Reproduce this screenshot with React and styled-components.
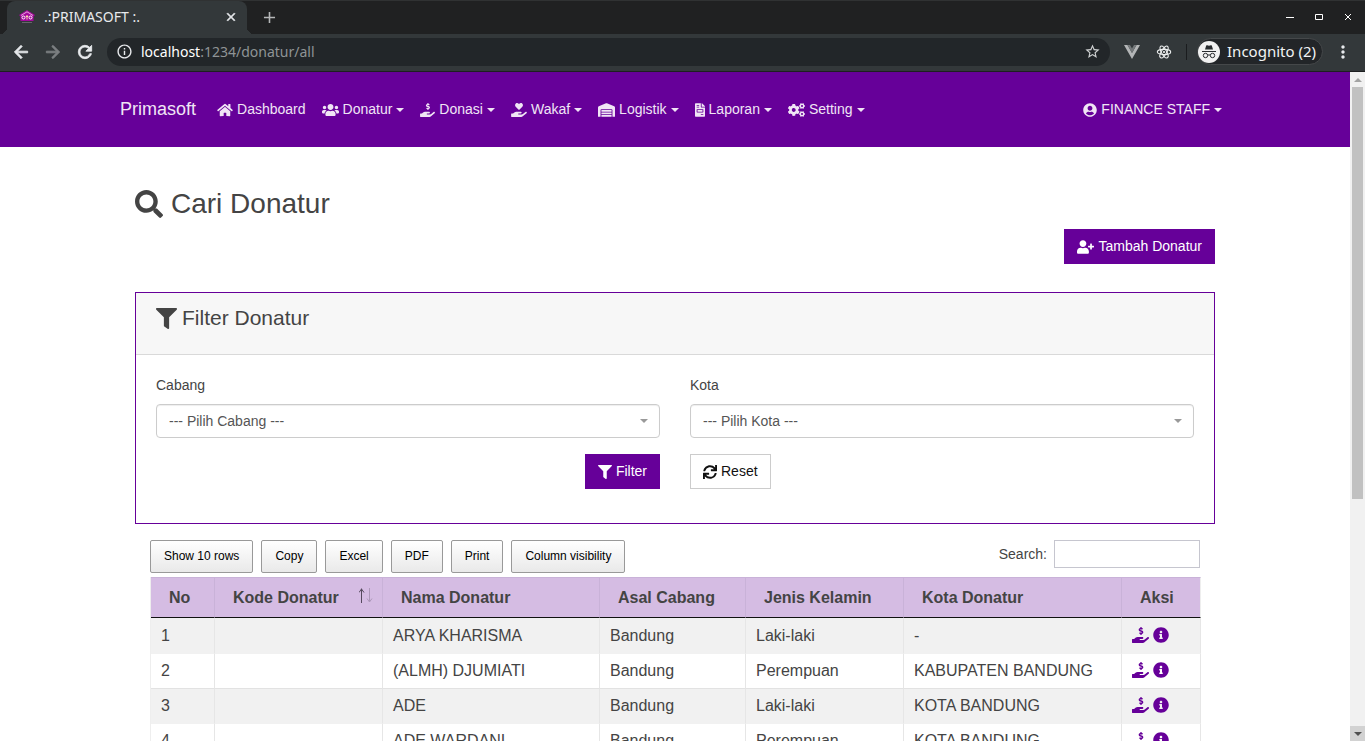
import React from 'react';
import styled, { createGlobalStyle } from 'styled-components';
import {
  FaHome, FaUsers, FaHandHoldingHeart, FaWarehouse, FaFileInvoice,
  FaCogs, FaUserCircle, FaSearch, FaUserPlus, FaFilter, FaSync, FaInfoCircle,
} from 'react-icons/fa';
import { MdArrowBack, MdArrowForward, MdRefresh, MdInfoOutline, MdStarBorder, MdMoreVert, MdClose, MdAdd } from 'react-icons/md';

const purple = '#660099';

const GlobalStyle = createGlobalStyle`
  *, *::before, *::after { box-sizing: border-box; }
  body {
    margin: 0;
    overflow: hidden;
    background: #fff;
    color: #444;
    font: 14px/21px "Liberation Sans", Arial, sans-serif;
  }
  button, input, select { font: inherit; margin: 0; }
  h1, h2 { margin: 0; font-weight: 400; }
  a { color: inherit; text-decoration: none; }
`;

const Window = styled.div`
  display: flex;
  flex-direction: column;
  height: 100vh;
`;

/* ---------- browser frame ---------- */
const TabStrip = styled.div`
  flex: none;
  display: flex;
  align-items: stretch;
  height: 34px;
  padding-left: 7px;
  border-top: 1px solid #303233;
  background: #202122;
  color: #e8eaed;
  font-family: "Noto Sans", sans-serif;
`;

const Tab = styled.div`
  position: relative;
  display: flex;
  align-items: center;
  width: 240px;
  padding: 0 9px 2px 12px;
  border-radius: 8px 8px 0 0;
  background: #33383a;
  font-size: 14px;
  &::before, &::after {
    content: '';
    position: absolute;
    bottom: 0;
    width: 7px;
    height: 7px;
  }
  &::before {
    right: 100%;
    background: radial-gradient(circle at 0 0, transparent 7px, #33383a 7px);
  }
  &::after {
    left: 100%;
    background: radial-gradient(circle at 100% 0, transparent 7px, #33383a 7px);
  }
`;

const TabTitle = styled.span`
  flex: 1;
  padding-left: 9px;
`;

const FrameButton = styled.button`
  display: inline-flex;
  align-items: center;
  justify-content: center;
  width: ${(p) => p.$width || 32}px;
  padding: 0;
  border: 0;
  background: none;
  color: ${(p) => p.$color || '#e8eaed'};
  path:not([fill='none']) { stroke-width: ${(p) => (p.$bold ? 1 : 'inherit')}; }
`;

const WindowControls = styled.div`
  display: flex;
  margin-left: auto;
  padding: 0 3px 2px 0;
`;

const Toolbar = styled.div`
  flex: none;
  display: flex;
  align-items: center;
  height: 38px;
  padding: 0 3px 2px 5px;
  border-bottom: 1px solid #1d1f20;
  background: #33383a;
  color: #e8eaed;
  font-family: "Noto Sans", sans-serif;
`;

const AddressBar = styled.div`
  flex: 1;
  display: flex;
  align-items: center;
  height: 28px;
  margin: 0 6px;
  padding: 0 9px 0 9px;
  border-radius: 14px;
  background: #222629;
`;

const AddressText = styled.div`
  flex: 1;
  padding-left: 8px;
  color: #8f9496;
  font-size: 14px;
  b { color: #fff; font-weight: 400; }
`;

const Divider = styled.span`
  width: 1px;
  height: 16px;
  margin: 0 10px 0 6px;
  background: #1a1c1e;
`;

const Incognito = styled.button`
  display: flex;
  align-items: center;
  gap: 7px;
  height: 27px;
  padding: 0 6px 0 0;
  border: 1px solid #45484a;
  border-radius: 14px;
  background: #222528;
  color: #f1f3f4;
  font-size: 15px;
`;

/* ---------- page ---------- */
const Viewport = styled.div`
  flex: 1;
  display: flex;
  min-height: 0;
`;

const Page = styled.div`
  flex: 1;
  min-width: 0;
  overflow: hidden;
`;

const Scrollbar = styled.div`
  flex: none;
  display: flex;
  flex-direction: column;
  width: 15px;
  background: #f1f1f1;
`;

const ScrollArrow = styled.button`
  flex: none;
  display: flex;
  align-items: center;
  justify-content: center;
  height: 15px;
  padding: 0;
  border: 0;
  background: ${(p) => (p.$active ? '#d2d2d2' : '#f1f1f1')};
  color: ${(p) => (p.$active ? '#505050' : '#a3a3a3')};
`;

const ScrollTrack = styled.div`
  flex: 1;
  padding: 0 2px;
`;

const ScrollThumb = styled.div`
  height: calc(65% - 3px);
  background: #c1c1c1;
`;

const Navbar = styled.nav`
  height: 75px;
  background: ${purple};
  color: #f0e5f5;
`;

const NavInner = styled.div`
  display: flex;
  align-items: center;
  max-width: 1110px;
  height: 100%;
  margin: 0 auto;
`;

const Brand = styled.a`
  margin-right: 13px;
  font-size: 18px;
  line-height: 27px;
`;

const IconLabel = styled.span`
  display: inline-flex;
  align-items: center;
  gap: ${(p) => p.$gap || 4}px;
  vertical-align: top;
  svg {
    flex: none;
    width: ${(p) => p.$width || 14}px;
    height: ${(p) => p.$height || 14}px;
  }
`;

const NavLink = styled.a`
  padding: 8px;
  white-space: nowrap;
  &:last-child { margin-left: auto; }
`;

const Caret = styled.span`
  border: 4px solid transparent;
  border-top-color: currentColor;
  border-bottom: 0;
`;

const Content = styled.main`
  max-width: 1110px;
  margin: 0 auto;
  padding: 40px 15px;
`;

const Title = styled.h1`
  font-size: 28px;
  line-height: 34px;
`;

const ActionRow = styled.div`
  display: flex;
  justify-content: flex-end;
  margin: 8px 0 28px;
`;

const Button = styled.button`
  height: 35px;
  padding: 0 12px;
  border: 1px solid ${(p) => (p.$plain ? '#ccc' : purple)};
  background: ${(p) => (p.$plain ? '#fff' : purple)};
  color: ${(p) => (p.$plain ? '#111' : '#fff')};
`;

const Card = styled.section`
  border: 1px solid ${purple};
`;

const CardHeader = styled.header`
  height: 62px;
  padding: 12px 20px;
  border-bottom: 1px solid #d9d9d9;
  background: #f7f7f7;
`;

const CardTitle = styled.h2`
  font-size: 21px;
  line-height: 26px;
`;

const FilterForm = styled.form`
  display: grid;
  grid-template-columns: 1fr 1fr;
  column-gap: 30px;
  padding: 20px 20px 34px;
`;

const Field = styled.div`
  display: flex;
  flex-direction: column;
  gap: 8px;
  margin-bottom: 16px;
`;

const SelectBox = styled.div`
  position: relative;
  &::after {
    content: '';
    position: absolute;
    top: 15px;
    right: 12px;
    border: 4px solid transparent;
    border-top-color: #999;
    border-bottom: 0;
    pointer-events: none;
  }
`;

const Select = styled.select`
  display: block;
  appearance: none;
  width: 100%;
  height: 34px;
  padding: 0 12px;
  border: 1px solid #ccc;
  border-radius: 4px;
  background: #fff;
  color: #555;
  box-shadow: inset 0 1px 1px rgba(0, 0, 0, 0.07);
`;

const FormAction = styled.div`
  display: flex;
  justify-content: ${(p) => (p.$end ? 'flex-end' : 'flex-start')};
`;

const TableArea = styled.section`
  padding: 16px 15px 0;
`;

const TableTools = styled.div`
  display: flex;
  justify-content: space-between;
  height: 37px;
`;

const ToolButtons = styled.div`
  display: flex;
  gap: 8px;
`;

const ToolButton = styled.button`
  height: 33px;
  padding: 0 13px;
  border: 1px solid #999;
  border-radius: 2px;
  background: linear-gradient(#fff, #e9e9e9);
  color: #000;
  font-size: 12px;
  white-space: nowrap;
`;

const SearchLabel = styled.label`
  display: flex;
  align-items: center;
  gap: 7px;
  height: 28px;
`;

const SearchInput = styled.input`
  width: 146px;
  height: 28px;
  padding: 0 8px;
  border: 1px solid #c6c6cf;
  border-radius: 0;
  background: #fff;
`;

const Table = styled.table`
  width: 100%;
  table-layout: fixed;
  border-collapse: separate;
  border-spacing: 0;
  border-left: 1px solid #eee;
  font-size: 16px;
  line-height: 24px;
`;

const HeadCell = styled.th`
  height: 41px;
  padding: 0 8px 0 18px;
  border-top: 1px solid #c9b2d8;
  border-right: 1px solid #c9b2d8;
  border-bottom: 1px solid #111;
  background: #d5bce3;
  text-align: left;
  white-space: nowrap;
  &:last-child { border-right-color: #eee; }
`;

const Sortable = styled.span`
  display: flex;
  justify-content: space-between;
`;

const Cell = styled.td`
  height: 35px;
  padding: 0 10px;
  border-right: 1px solid #e6e6e6;
  border-top: 1px solid #f1f1f1;
  white-space: nowrap;
`;

const Row = styled.tr`
  background: ${(p) => (p.$striped ? '#f1f1f1' : '#fff')};
  &:not(:first-child) > td { border-top-color: ${(p) => (p.$striped ? '#e2e2e2' : '#f1f1f1')}; }
`;

const RowActions = styled.div`
  display: flex;
  align-items: center;
  gap: 4px;
  padding-bottom: 2px;
  color: ${purple};
  a { display: flex; }
`;

/* An open hand under a dollar sign, 17:16 */
const HandDollar = (props) => (
  <svg viewBox="0 0 544 512" fill="currentColor" aria-hidden="true" {...props}>
    <path d="M257.600 144.300l50 14.300c3.600 1 6.100 4.400 6.100 8.100 0 4.600-3.800 8.400-8.400 8.400h-32.800c-3.600 0-7.100-.8-10.300-2.200-4.800-2.200-10.400-1.700-14.100 2l-17.500 17.500c-5.300 5.300-4.700 14.300 1.500 18.400 9.500 6.300 20.300 10.100 31.800 11.500V240c0 8.800 7.200 16 16 16h16c8.800 0 16-7.200 16-16v-17.600c30.300-3.600 53.300-31 49.300-63-2.900-23-20.700-41.300-42.900-47.700l-50-14.300c-3.600-1-6.100-4.400-6.100-8.100 0-4.600 3.800-8.400 8.400-8.400h32.800c3.600 0 7.100.8 10.300 2.200 4.800 2.200 10.400 1.700 14.100-2l17.500-17.500c5.300-5.300 4.700-14.300-1.500-18.400-9.500-6.300-20.300-10.100-31.800-11.500V16c0-8.800-7.200-16-16-16h-16c-8.800 0-16 7.200-16 16v17.600c-30.300 3.600-53.300 31-49.300 63 2.900 23 20.700 41.300 42.900 47.700zM533.900 328.100c-11.200-10.700-28.500-10-40.300 0L406.400 402c-10.700 9.100-24 14-37.800 14H256.900c-8.300 0-15.100-7.200-15.100-16s6.800-16 15.100-16h73.900c15.100 0 29-10.900 31.400-26.600 3.100-20-11.500-37.400-29.800-37.400H181.300c-25.500 0-50.200 9.300-69.900 26.100L67.500 384H15.100C6.800 384 0 391.200 0 400v96c0 8.800 6.800 16 15.100 16H352.100c13.700 0 27-4.900 37.800-14l142.800-121c14.400-12.100 15.500-35.300 1.200-48.900z" />
  </svg>
);

const SortArrows = () => (
  <svg width="15" height="24" viewBox="0 0 15 24" fill="none" aria-hidden="true">
    <path d="M2.500 17V2.500M0 6.500 2.500 3l2.500 3.500" stroke="#55495d" />
    <path d="M10.500 2v14M8 12.500l2.500 3.500 2.500-3.500" stroke="#ad98ba" />
  </svg>
);

const nav = [
  { label: 'Dashboard', Icon: FaHome, width: 16 },
  { label: 'Donatur', Icon: FaUsers, width: 17, menu: true },
  { label: 'Donasi', Icon: HandDollar, width: 15, menu: true },
  { label: 'Wakaf', Icon: FaHandHoldingHeart, width: 16, menu: true },
  { label: 'Logistik', Icon: FaWarehouse, width: 17, menu: true },
  { label: 'Laporan', Icon: FaFileInvoice, width: 10, menu: true },
  { label: 'Setting', Icon: FaCogs, width: 17, menu: true },
  { label: 'FINANCE STAFF', Icon: FaUserCircle, width: 14, menu: true },
];

const columns = [
  ['No', 64], ['Kode Donatur', 168], ['Nama Donatur', 217], ['Asal Cabang', 146],
  ['Jenis Kelamin', 158], ['Kota Donatur', 218], ['Aksi', 79],
];

const rows = [
  ['1', '', 'ARYA KHARISMA', 'Bandung', 'Laki-laki', '-'],
  ['2', '', '(ALMH) DJUMIATI', 'Bandung', 'Perempuan', 'KABUPATEN BANDUNG'],
  ['3', '', 'ADE', 'Bandung', 'Laki-laki', 'KOTA BANDUNG'],
  ['4', '', 'ADE WARDANI', 'Bandung', 'Perempuan', 'KOTA BANDUNG'],
];

const Favicon = () => (
  <svg width="16" height="14" viewBox="0 0 16 14" aria-hidden="true">
    <path d="M8 0 16 5 14.500 6.500V11H1.500V6.500L0 5Z" fill="#a3099c" />
    <path d="M2 5.500 8 1.800 14 5.500" fill="none" stroke="#e9a7dc" />
    <circle cx="4.500" cy="7.500" r="1.500" fill="none" stroke="#fff" />
    <path d="M8 5v4.500M6.800 6.500h2.400" stroke="#ffd7a8" />
    <circle cx="11.500" cy="7.500" r="1.500" fill="none" stroke="#fff" />
    <path d="M3 12.500h10" stroke="#68656c" />
  </svg>
);

const VueMark = () => (
  <svg width="16" height="14" viewBox="0 0 16 14" aria-hidden="true">
    <path d="M0 0h3.500L8 8 12.500 0H16L8 14Z" fill="#b3b5b6" />
    <path d="M3.500 0H6l2 3.500L10 0h2.500L8 8Z" fill="#74787a" />
  </svg>
);

const ReactMark = () => (
  <svg width="16" height="16" viewBox="0 0 16 16" fill="none" stroke="#eceeee" strokeWidth="1.100" aria-hidden="true">
    <ellipse cx="8" cy="8" rx="6.700" ry="2.600" />
    <ellipse cx="8" cy="8" rx="6.700" ry="2.600" transform="rotate(60 8 8)" />
    <ellipse cx="8" cy="8" rx="6.700" ry="2.600" transform="rotate(120 8 8)" />
    <circle cx="8" cy="8" r="1" fill="#fff" stroke="none" />
  </svg>
);

const Spy = () => (
  <svg width="22" height="22" viewBox="0 0 22 22" aria-hidden="true">
    <circle cx="11" cy="11" r="11" fill="#f1f1f1" />
    <path d="M7 8.500 8.200 4.500Q8.500 4 9.200 4.200L11 4.800l1.800-.6Q13.500 4 13.800 4.500L15 8.500Z" fill="#292c2f" />
    <path d="M4 10.500h14" stroke="#292c2f" />
    <g fill="none" stroke="#292c2f">
      <circle cx="7.500" cy="14.500" r="2.200" />
      <circle cx="14.500" cy="14.500" r="2.200" />
      <path d="M9.700 14.200q1.300-.7 2.600 0" />
    </g>
  </svg>
);

export default function App() {
  return (
    <>
      <GlobalStyle />
      <Window>
        <TabStrip>
          <Tab>
            <Favicon />
            <TabTitle>.:PRIMASOFT :.</TabTitle>
            <FrameButton $width={14} $bold aria-label="Close tab"><MdClose size={14} /></FrameButton>
          </Tab>
          <FrameButton $width={44} $color="#b5b7b8" aria-label="New tab"><MdAdd size={19} /></FrameButton>
          <WindowControls>
            <FrameButton $width={29} aria-label="Minimize">
              <svg width="8" height="8" stroke="#fff"><path d="M0 4.500h8" /></svg>
            </FrameButton>
            <FrameButton $width={29} aria-label="Maximize">
              <svg width="8" height="6" fill="none" stroke="#fff"><path d="M.5 .5h7v5h-7z" /></svg>
            </FrameButton>
            <FrameButton $width={29} aria-label="Close">
              <svg width="6" height="6" stroke="#fff"><path d="M0 0l6 6M6 0 0 6" /></svg>
            </FrameButton>
          </WindowControls>
        </TabStrip>
        <Toolbar>
          <FrameButton $bold aria-label="Back"><MdArrowBack size={20} /></FrameButton>
          <FrameButton $bold $color="#7d8183" aria-label="Forward"><MdArrowForward size={20} /></FrameButton>
          <FrameButton $bold aria-label="Reload"><MdRefresh size={20} /></FrameButton>
          <AddressBar>
            <MdInfoOutline size={17} />
            <AddressText><b>localhost</b>:1234/donatur/all</AddressText>
            <MdStarBorder size={17} color="#cfd1d2" />
          </AddressBar>
          <FrameButton aria-label="Vue devtools"><VueMark /></FrameButton>
          <FrameButton aria-label="React devtools"><ReactMark /></FrameButton>
          <Divider />
          <Incognito><Spy />Incognito (2)</Incognito>
          <FrameButton $width={39} aria-label="Menu"><MdMoreVert size={20} /></FrameButton>
        </Toolbar>

        <Viewport>
          <Page>
            <Navbar>
              <NavInner>
                <Brand href="#">Primasoft</Brand>
                {nav.map(({ label, Icon, width, menu }) => (
                  <NavLink href="#" key={label}>
                    <IconLabel $width={width}><Icon />{label}{menu && <Caret />}</IconLabel>
                  </NavLink>
                ))}
              </NavInner>
            </Navbar>

            <Content>
              <Title><IconLabel $width={28} $height={28} $gap={8}><FaSearch />Cari Donatur</IconLabel></Title>
              <ActionRow>
                <Button><IconLabel $width={17}><FaUserPlus />Tambah Donatur</IconLabel></Button>
              </ActionRow>

              <Card>
                <CardHeader>
                  <CardTitle><IconLabel $width={21} $height={21} $gap={5}><FaFilter />Filter Donatur</IconLabel></CardTitle>
                </CardHeader>
                <FilterForm onSubmit={(e) => e.preventDefault()}>
                  <Field>
                    <label htmlFor="cabang">Cabang</label>
                    <SelectBox><Select id="cabang"><option>--- Pilih Cabang ---</option></Select></SelectBox>
                  </Field>
                  <Field>
                    <label htmlFor="kota">Kota</label>
                    <SelectBox><Select id="kota"><option>--- Pilih Kota ---</option></Select></SelectBox>
                  </Field>
                  <FormAction $end>
                    <Button type="submit"><IconLabel><FaFilter />Filter</IconLabel></Button>
                  </FormAction>
                  <FormAction>
                    <Button type="reset" $plain><IconLabel><FaSync />Reset</IconLabel></Button>
                  </FormAction>
                </FilterForm>
              </Card>

              <TableArea>
                <TableTools>
                  <ToolButtons>
                    {['Show 10 rows', 'Copy', 'Excel', 'PDF', 'Print', 'Column visibility'].map((t) => (
                      <ToolButton key={t}>{t}</ToolButton>
                    ))}
                  </ToolButtons>
                  <SearchLabel>Search:<SearchInput type="search" /></SearchLabel>
                </TableTools>
                <Table>
                  <colgroup>
                    {columns.map(([name, width]) => <col key={name} width={width} />)}
                  </colgroup>
                  <thead>
                    <tr>
                      {columns.map(([name]) => (
                        <HeadCell key={name}>
                          {name === 'Kode Donatur' ? <Sortable>{name}<SortArrows /></Sortable> : name}
                        </HeadCell>
                      ))}
                    </tr>
                  </thead>
                  <tbody>
                    {rows.map((row, index) => (
                      <Row key={row[0]} $striped={index % 2 === 0}>
                        {row.map((value, i) => <Cell key={columns[i][0]}>{value}</Cell>)}
                        <Cell>
                          <RowActions>
                            <a href="#" aria-label="Donasi"><HandDollar width={17} height={16} /></a>
                            <a href="#" aria-label="Info"><FaInfoCircle size={16} /></a>
                          </RowActions>
                        </Cell>
                      </Row>
                    ))}
                  </tbody>
                </Table>
              </TableArea>
            </Content>
          </Page>
          <Scrollbar>
            <ScrollArrow aria-label="Scroll up">
              <svg width="8" height="4" fill="currentColor"><path d="M0 4 4 0l4 4z" /></svg>
            </ScrollArrow>
            <ScrollTrack><ScrollThumb /></ScrollTrack>
            <ScrollArrow $active aria-label="Scroll down">
              <svg width="8" height="4" fill="currentColor"><path d="M0 0h8L4 4z" /></svg>
            </ScrollArrow>
          </Scrollbar>
        </Viewport>
      </Window>
    </>
  );
}
